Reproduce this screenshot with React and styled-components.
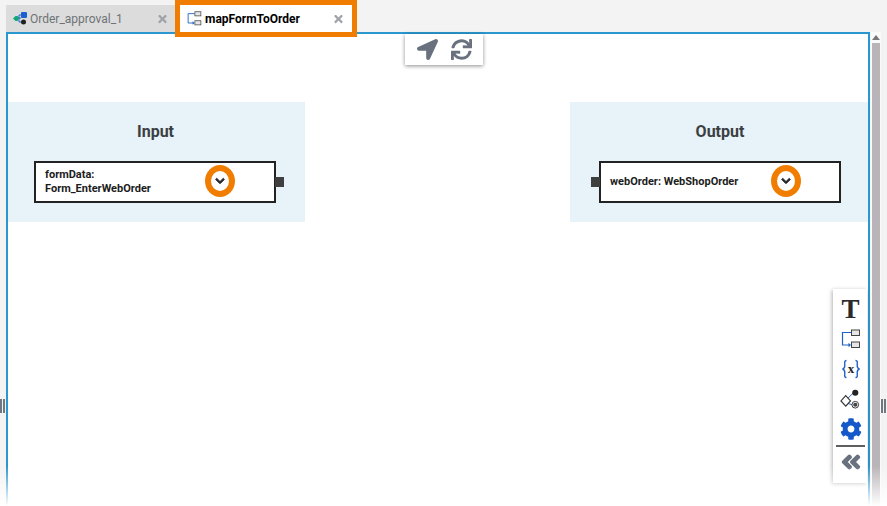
import React from 'react';
import styled, { createGlobalStyle } from 'styled-components';
import { FaLocationArrow, FaSync, FaCog, FaAngleDoubleLeft, FaChevronDown, FaTimes } from 'react-icons/fa';

const Global = createGlobalStyle`
  html, body { margin: 0; padding: 0; height: 100%; background: #f3f3f3; overflow: hidden; }
  #root { height: 100%; }
`;

const Page = styled.div`
  position: relative;
  width: 887px;
  height: 506px;
  font-family: Roboto, 'Liberation Sans', sans-serif;
  display: flex;
  flex-direction: column;
  padding: 0 6px;
  box-sizing: border-box;
  overflow: hidden;
`;

const TabBar = styled.div`
  display: flex;
  align-items: flex-start;
  height: 32px;
  padding-top: 5px;
  box-sizing: border-box;
  position: relative;
  z-index: 3;
`;

const Tab = styled.div`
  width: 169px;
  height: 27px;
  background: #dcdcdc;
  display: flex;
  align-items: center;
  padding: 0 7px;
  box-sizing: border-box;
  font-size: 12px;
  color: #6f7378;
`;

const ActiveTab = styled.div`
  width: 182px;
  height: 37px;
  margin-top: -5px;
  border: 5px solid #f07d00;
  background: #fff;
  display: flex;
  align-items: center;
  padding: 0 7px;
  box-sizing: border-box;
  font-size: 12px;
  font-weight: 700;
  color: #000;
`;

const TabLabel = styled.span`
  flex: 1;
  margin-left: ${({ $gap }) => $gap}px;
`;

const Close = styled(FaTimes)`
  width: 11px;
  height: 12px;
  color: #9ea3a9;
  margin-right: ${({ $right }) => $right}px;
`;

const Body = styled.div`
  display: flex;
  flex: 1;
  min-height: 0;
`;

const Canvas = styled.div`
  position: relative;
  width: 864px;
  height: 480px;
  box-sizing: border-box;
  border: 2px solid #2b97cf;
  border-bottom: none;
  background: #fff;
  display: flex;
  justify-content: space-between;
  align-items: flex-start;
  padding-top: 68px;
`;

const Panel = styled.div`
  width: ${({ $w }) => $w}px;
  height: 120px;
  background: #e7f2f9;
  box-sizing: border-box;
  padding-left: ${({ $left }) => $left}px;
  display: flex;
  flex-direction: column;
  align-items: flex-start;
`;

const PanelTitle = styled.div`
  align-self: stretch;
  margin-left: ${({ $shift }) => $shift}px;
  text-align: center;
  font-size: 16px;
  font-weight: 700;
  line-height: 20px;
  margin-top: 20px;
  margin-bottom: 19px;
  color: #3c3f42;
`;

const Node = styled.div`
  position: relative;
  width: 242px;
  height: 42px;
  box-sizing: border-box;
  border: 2px solid #222;
  background: #fff;
  display: flex;
  align-items: center;
  padding-left: 9px;
  font-size: 11px;
  font-weight: 700;
  line-height: 14px;
  color: #1c1c1c;
`;

const Port = styled.div`
  position: absolute;
  top: 14px;
  ${({ $side }) => ($side === 'right' ? 'right: -10px;' : 'left: -10px;')}
  width: 9px;
  height: 10px;
  background: #3f3f3f;
`;

const Expand = styled.div`
  position: absolute;
  top: 2px;
  left: ${({ $left }) => $left}px;
  width: 30px;
  height: 32px;
  box-sizing: border-box;
  border: 6px solid #f07d00;
  border-radius: 50%;
  background: #fff;
  display: flex;
  align-items: center;
  justify-content: center;
  color: #26292c;
  font-size: 10px;
`;

const TopTools = styled.div`
  position: absolute;
  top: 0;
  left: 397px;
  width: 78px;
  height: 31px;
  background: #fff;
  box-shadow: 0 1px 4px rgba(0, 0, 0, 0.45);
  display: flex;
  align-items: center;
  justify-content: center;
  gap: 13px;
  color: #68717d;
  font-size: 21px;
`;

const SideTools = styled.div`
  position: absolute;
  top: 255px;
  right: 1px;
  width: 34px;
  height: 194px;
  padding-top: 5px;
  box-sizing: border-box;
  background: #fff;
  box-shadow: -1px 1px 4px rgba(0, 0, 0, 0.3);
  display: flex;
  flex-direction: column;
  align-items: center;
`;

const ToolSlot = styled.div`
  height: 30px;
  width: 100%;
  padding-left: 1px;
  box-sizing: border-box;
  display: flex;
  align-items: center;
  justify-content: center;
  flex: none;
`;

const TextTool = styled.span`
  font-family: 'Liberation Serif', serif;
  font-weight: 700;
  font-size: 27px;
  line-height: 30px;
  color: #2a2a2a;
`;

const Rule = styled.div`
  width: 29px;
  height: 2px;
  background: #5d5f61;
  margin-top: 1px;
  flex: none;
`;

const Fade = styled.div`
  position: absolute;
  left: 0;
  right: 0;
  bottom: 0;
  height: 40px;
  background: linear-gradient(to bottom, rgba(255, 255, 255, 0), #fff);
  z-index: 4;
  pointer-events: none;
`;

const Scrollbar = styled.div`
  width: 10px;
  margin-left: 1px;
  height: 480px;
  background: #fafafa;
  display: flex;
  flex-direction: column;
  align-items: center;
`;

const ScrollArrow = styled.div`
  margin-top: 3px;
  width: 0;
  height: 0;
  border-left: 4px solid transparent;
  border-right: 4px solid transparent;
  border-bottom: 5px solid #77777a;
`;

const ScrollThumb = styled.div`
  margin-top: 3px;
  width: 8px;
  flex: 1;
  background: #b9b4b8;
`;

const Grip = styled.div`
  position: absolute;
  top: 399px;
  ${({ $side }) => ($side === 'left' ? 'left: 0;' : 'right: 1px;')}
  width: 5px;
  height: 14px;
  border-left: 2px solid #6f7780;
  border-right: 2px solid #6f7780;
  box-sizing: border-box;
`;

const ProcessIcon = () => (
  <svg width="14" height="13" viewBox="0 0 14 13">
    <path d="M3 6h5M6 3h3M6 3v7h3" fill="none" stroke="#1f62c7" strokeWidth="1" />
    <rect x="8" y="0" width="6" height="6" rx="1" fill="#1a5fd0" />
    <path d="M0 6.500L2.500 4h2L6 6.500 4.500 9h-2z" fill="#12a67a" />
    <circle cx="10.500" cy="10" r="2.500" fill="#222" />
  </svg>
);

const MappingIcon = ({ size = 15 }) => (
  <svg width={size} height={size} viewBox="0 0 20 20">
    <rect x="10.500" y="1" width="8" height="5.500" fill="#e6e6e6" stroke="#444" />
    <rect x="10.500" y="13" width="8" height="5.500" fill="#e6e6e6" stroke="#444" />
    <path d="M10 3.500H1.500V16H9" fill="none" stroke="#1f62c7" strokeWidth="1.200" />
    <path d="M7.500 13.800L10 16l-2.500 2.200z" fill="#1f62c7" />
  </svg>
);

const VariableIcon = () => (
  <svg width="20" height="20" viewBox="0 0 20 20">
    <path
      d="M5.500 1.500C3 1.500 3.800 4 3.800 6.500 3.800 8.500 3.500 9.500 1.500 10 3.500 10.500 3.800 11.500 3.800 13.500 3.800 16 3 18.500 5.500 18.500M14.500 1.500C17 1.500 16.200 4 16.200 6.500 16.200 8.500 16.500 9.500 18.500 10 16.500 10.500 16.200 11.500 16.200 13.500 16.200 16 17 18.500 14.500 18.500"
      fill="none"
      stroke="#1f62c7"
      strokeWidth="1.400"
    />
    <text x="10" y="14" textAnchor="middle" fontFamily="Liberation Serif, serif" fontWeight="700" fontSize="13" fill="#222">x</text>
  </svg>
);

const FlowIcon = () => (
  <svg width="21" height="21" viewBox="0 0 22 22">
    <path d="M8 10L14 4M8 15l6 2" stroke="#1f62c7" strokeWidth="1" fill="none" />
    <path d="M6 7l5 5.500-5 5.500-5-5.500z" fill="#fff" stroke="#333" strokeWidth="1.200" />
    <circle cx="16" cy="4" r="3.200" fill="#222" />
    <circle cx="16" cy="16.500" r="3.500" fill="#fff" stroke="#333" />
    <circle cx="16" cy="16.500" r="2.200" fill="#444" />
  </svg>
);

const App = () => (
  <Page>
    <Global />
    <TabBar>
      <Tab>
        <ProcessIcon />
        <TabLabel $gap={3}>Order_approval_1</TabLabel>
        <Close $right={0} />
      </Tab>
      <ActiveTab>
        <MappingIcon />
        <TabLabel $gap={3}>mapFormToOrder</TabLabel>
        <Close $right={1} />
      </ActiveTab>
    </TabBar>
    <Body>
      <Canvas>
        <TopTools>
          <FaLocationArrow />
          <FaSync />
        </TopTools>
        <Panel $w={297} $left={26}>
          <PanelTitle $shift={-28}>Input</PanelTitle>
          <Node>
            <span>
              formData:
              <br />
              Form_EnterWebOrder
            </span>
            <Expand $left={169}>
              <FaChevronDown stroke="currentColor" strokeWidth={50} />
            </Expand>
            <Port $side="right" />
          </Node>
        </Panel>
        <Panel $w={298} $left={29}>
          <PanelTitle $shift={-27}>Output</PanelTitle>
          <Node>
            <span>webOrder: WebShopOrder</span>
            <Expand $left={170}>
              <FaChevronDown stroke="currentColor" strokeWidth={50} />
            </Expand>
            <Port $side="left" />
          </Node>
        </Panel>
        <SideTools>
          <ToolSlot>
            <TextTool>T</TextTool>
          </ToolSlot>
          <ToolSlot>
            <MappingIcon size={20} />
          </ToolSlot>
          <ToolSlot>
            <VariableIcon />
          </ToolSlot>
          <ToolSlot>
            <FlowIcon />
          </ToolSlot>
          <ToolSlot>
            <FaCog size={22} color="#1558c9" />
          </ToolSlot>
          <Rule />
          <ToolSlot>
            <FaAngleDoubleLeft size={22} color="#68717d" stroke="currentColor" strokeWidth={30} />
          </ToolSlot>
        </SideTools>
      </Canvas>
      <Scrollbar>
        <ScrollArrow />
        <ScrollThumb />
      </Scrollbar>
    </Body>
    <Grip $side="left" />
    <Grip $side="right" />
    <Fade />
  </Page>
);

export default App;
